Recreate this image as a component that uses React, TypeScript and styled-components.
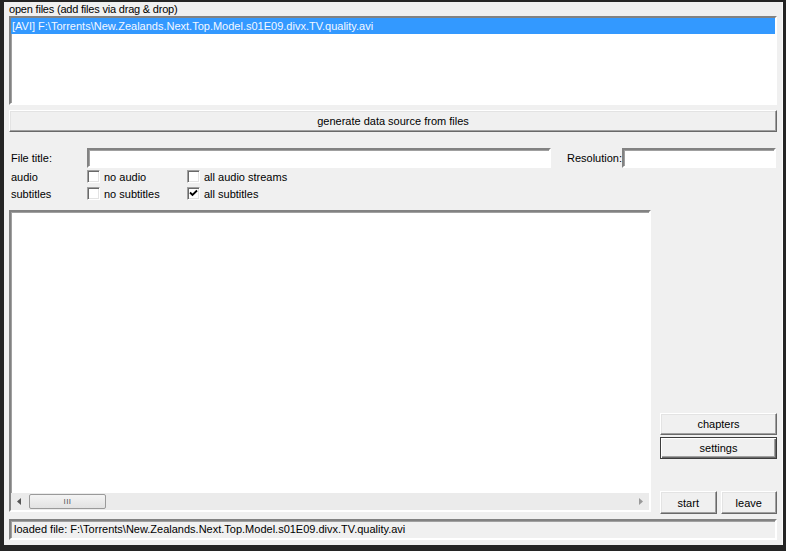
import React from "react";
import styled, { createGlobalStyle, css } from "styled-components";

const Global = createGlobalStyle`
  html, body { margin: 0; padding: 0; background: #1e1e1e; }
  body { font-family: "Liberation Sans", Arial, sans-serif; font-size: 11px; color: #000; }
  * { box-sizing: border-box; }
`;

const Frame = styled.div`
  width: 786px;
  height: 551px;
  background: #242424;
  padding: 2px 4px 6px 4px;
  display: flex;
`;

const Client = styled.div`
  flex: 1;
  background: #f0f0f0;
  border-right: 1px solid #fafafa;
  display: flex;
  flex-direction: column;
  padding: 0 5px 5px 5px;
`;

const sunken = css`
  border: 2px solid;
  border-color: #828282 #ffffff #ffffff #828282;
  box-shadow: inset 1px 1px 0 #a0a0a0;
`;

const raised = css`
  border: 1px solid;
  border-color: #ffffff #696969 #696969 #ffffff;
  box-shadow: inset -1px -1px 0 #a0a0a0, inset 1px 1px 0 #e3e3e3;
`;

const Caption = styled.div`
  height: 14px;
  line-height: 14px;
  letter-spacing: -0.2px;
`;

const ListBox = styled.div`
  ${sunken};
  background: #fff;
  height: 89px;
`;

const ListItem = styled.div<{ $selected?: boolean }>`
  height: 16px;
  line-height: 16px;
  padding-left: 1px;
  white-space: nowrap;
  color: ${(p) => (p.$selected ? "#f4f8ff" : "#000")};
  background: ${(p) => (p.$selected ? "#3399ff" : "transparent")};
`;

const Button = styled.button<{ $focused?: boolean }>`
  ${raised};
  background: #f0f0f0;
  font: inherit;
  color: #000;
  padding: 0;
  height: 22px;
  ${(p) =>
    p.$focused &&
    css`
      border: 1px solid #3c3c3c;
      box-shadow: inset 1px 1px 0 #ffffff, inset -1px -1px 0 #696969, inset -2px -2px 0 #a0a0a0;
    `}
`;

const WideButton = styled(Button)`
  margin-top: 5px;
  width: 100%;
`;

const Form = styled.div`
  margin-top: 16px;
  display: flex;
  flex-direction: column;
`;

const TitleRow = styled.div`
  display: flex;
  align-items: center;
  height: 20px;
`;

const FieldLabel = styled.div<{ $w?: number }>`
  width: ${(p) => (p.$w ? `${p.$w}px` : "auto")};
  padding-left: 2px;
  flex-shrink: 0;
  white-space: nowrap;
`;

const TextInput = styled.div<{ $w: number }>`
  ${sunken};
  background: #fff;
  width: ${(p) => p.$w}px;
  flex-shrink: 0;
  height: 20px;
`;

const Spacer = styled.div<{ $w: number }>`
  width: ${(p) => p.$w}px;
  flex-shrink: 0;
`;

const OptRow = styled.div`
  display: flex;
  align-items: center;
  height: 17px;
`;

const Option = styled.label<{ $w?: number }>`
  display: flex;
  align-items: center;
  gap: 4px;
  width: ${(p) => (p.$w ? `${p.$w}px` : "auto")};
  white-space: nowrap;
`;

const Box = styled.span`
  width: 13px;
  height: 13px;
  border: 1px solid;
  border-color: #a0a0a0 #ffffff #ffffff #a0a0a0;
  box-shadow: inset 1px 1px 0 #696969, inset -1px -1px 0 #e3e3e3;
  background: #fff;
  display: flex;
  align-items: center;
  justify-content: center;
  flex-shrink: 0;
`;

const Main = styled.div`
  margin-top: 8px;
  display: flex;
  height: 304px;
  gap: 9px;
`;

const TextArea = styled.div`
  ${sunken};
  background: #fff;
  width: 642px;
  height: 302px;
  display: flex;
  flex-direction: column;
  justify-content: flex-end;
`;

const HScroll = styled.div`
  height: 17px;
  background: #ebebeb;
  display: flex;
  align-items: center;
  padding: 0 4px;
`;

const Arrow = styled.span`
  width: 8px;
  display: flex;
  justify-content: center;
`;

const Thumb = styled.div`
  margin-left: 6px;
  width: 77px;
  height: 15px;
  border: 1px solid #9a9a9a;
  border-radius: 2px;
  background: linear-gradient(#f4f4f4, #e2e2e2);
  display: flex;
  align-items: center;
  justify-content: center;
  font-size: 8px;
  color: #555;
  letter-spacing: 0.5px;
`;

const ScrollFill = styled.div`
  flex: 1;
`;

const SideColumn = styled.div`
  width: 117px;
  display: flex;
  flex-direction: column;
  justify-content: flex-end;
  gap: 2px;
`;

const ActionRow = styled.div`
  margin-top: 30px;
  display: flex;
  gap: 4px;
`;

const SmallButton = styled(Button)`
  flex: 1;
  height: 23px;
`;

const Status = styled.div`
  ${sunken};
  margin-top: 5px;
  height: 21px;
  line-height: 17px;
  padding-left: 3px;
  white-space: nowrap;
  background: #f0f0f0;
`;

const Check = () => (
  <svg width="9" height="9" viewBox="0 0 9 9">
    <path d="M1 3.5 L3.5 6 L8 1.5" stroke="#000" strokeWidth="1.8" fill="none" />
  </svg>
);

const TriLeft = () => (
  <svg width="4" height="7" viewBox="0 0 4 7">
    <path d="M4 0 L0 3.5 L4 7 Z" fill="#555" />
  </svg>
);

const TriRight = () => (
  <svg width="4" height="7" viewBox="0 0 4 7">
    <path d="M0 0 L4 3.5 L0 7 Z" fill="#999" />
  </svg>
);

const path = "F:\\Torrents\\New.Zealands.Next.Top.Model.s01E09.divx.TV.quality.avi";

export default function App() {
  return (
    <>
      <Global />
      <Frame>
        <Client>
          <Caption>open files (add files via drag &amp; drop)</Caption>
          <ListBox>
            <ListItem $selected>[AVI] {path}</ListItem>
          </ListBox>
          <WideButton>generate data source from files</WideButton>
          <Form>
            <TitleRow>
              <FieldLabel $w={78}>File title:</FieldLabel>
              <TextInput $w={464} />
              <Spacer $w={14} />
              <FieldLabel>Resolution:</FieldLabel>
              <TextInput $w={154} />
            </TitleRow>
            <OptRow>
              <FieldLabel $w={78}>audio</FieldLabel>
              <Option $w={100}>
                <Box />
                no audio
              </Option>
              <Option>
                <Box />
                all audio streams
              </Option>
            </OptRow>
            <OptRow>
              <FieldLabel $w={78}>subtitles</FieldLabel>
              <Option $w={100}>
                <Box />
                no subtitles
              </Option>
              <Option>
                <Box>
                  <Check />
                </Box>
                all subtitles
              </Option>
            </OptRow>
          </Form>
          <Main>
            <TextArea>
              <HScroll>
                <Arrow>
                  <TriLeft />
                </Arrow>
                <Thumb>III</Thumb>
                <ScrollFill />
                <Arrow>
                  <TriRight />
                </Arrow>
              </HScroll>
            </TextArea>
            <SideColumn>
              <Button>chapters</Button>
              <Button $focused>settings</Button>
              <ActionRow>
                <SmallButton>start</SmallButton>
                <SmallButton>leave</SmallButton>
              </ActionRow>
            </SideColumn>
          </Main>
          <Status>loaded file: {path}</Status>
        </Client>
      </Frame>
    </>
  );
}
